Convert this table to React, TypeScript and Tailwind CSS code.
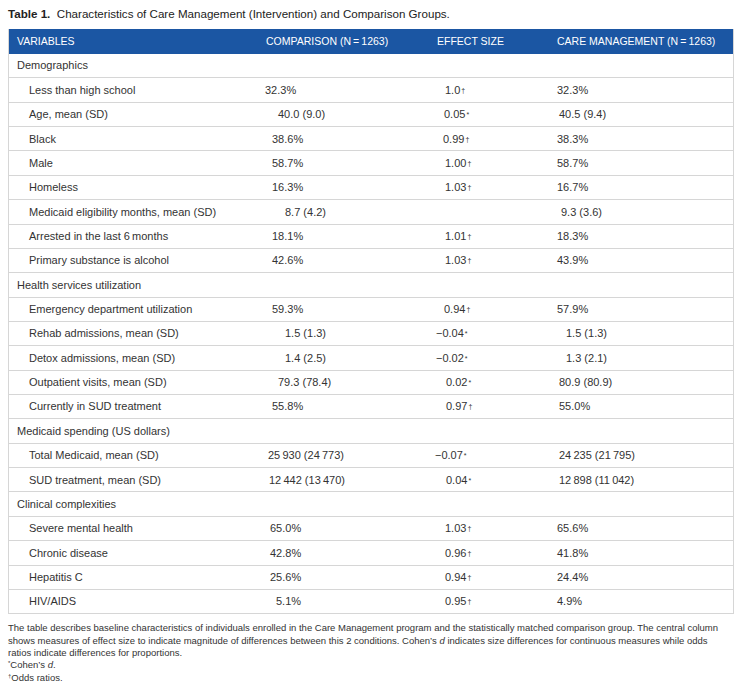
import React from "react";

type Cell = { t: string; sup?: string; pl: string };
type Row =
  | { kind: "cat"; label: string }
  | { kind: "item"; label: string; c: Cell; e?: Cell; m: Cell };

const T = "\u2009";
const D = "\u2020";

const rows: Row[] = [
  { kind: "cat", label: "Demographics" },
  { kind: "item", label: "Less than high school", c: { t: "32.3%", pl: "pl-[8px]" }, e: { t: "1.0", sup: D, pl: "pl-[17px]" }, m: { t: "32.3%", pl: "pl-[9px]" } },
  { kind: "item", label: "Age, mean (SD)", c: { t: "40.0 (9.0)", pl: "pl-[21px]" }, e: { t: "0.05", sup: "*", pl: "pl-[16px]" }, m: { t: "40.5 (9.4)", pl: "pl-[11px]" } },
  { kind: "item", label: "Black", c: { t: "38.6%", pl: "pl-[15px]" }, e: { t: "0.99", sup: D, pl: "pl-[15px]" }, m: { t: "38.3%", pl: "pl-[9px]" } },
  { kind: "item", label: "Male", c: { t: "58.7%", pl: "pl-[15px]" }, e: { t: "1.00", sup: D, pl: "pl-[17px]" }, m: { t: "58.7%", pl: "pl-[9px]" } },
  { kind: "item", label: "Homeless", c: { t: "16.3%", pl: "pl-[15px]" }, e: { t: "1.03", sup: D, pl: "pl-[17px]" }, m: { t: "16.7%", pl: "pl-[9px]" } },
  { kind: "item", label: "Medicaid eligibility months, mean (SD)", c: { t: "8.7 (4.2)", pl: "pl-[28px]" }, m: { t: "9.3 (3.6)", pl: "pl-[13px]" } },
  { kind: "item", label: `Arrested in the last 6${T}months`, c: { t: "18.1%", pl: "pl-[15px]" }, e: { t: "1.01", sup: D, pl: "pl-[17px]" }, m: { t: "18.3%", pl: "pl-[9px]" } },
  { kind: "item", label: "Primary substance is alcohol", c: { t: "42.6%", pl: "pl-[15px]" }, e: { t: "1.03", sup: D, pl: "pl-[17px]" }, m: { t: "43.9%", pl: "pl-[9px]" } },
  { kind: "cat", label: "Health services utilization" },
  { kind: "item", label: "Emergency department utilization", c: { t: "59.3%", pl: "pl-[15px]" }, e: { t: "0.94", sup: D, pl: "pl-[16px]" }, m: { t: "57.9%", pl: "pl-[9px]" } },
  { kind: "item", label: "Rehab admissions, mean (SD)", c: { t: "1.5 (1.3)", pl: "pl-[28px]" }, e: { t: "\u22120.04", sup: "*", pl: "pl-[8px]" }, m: { t: "1.5 (1.3)", pl: "pl-[18px]" } },
  { kind: "item", label: "Detox admissions, mean (SD)", c: { t: "1.4 (2.5)", pl: "pl-[28px]" }, e: { t: "\u22120.02", sup: "*", pl: "pl-[8px]" }, m: { t: "1.3 (2.1)", pl: "pl-[18px]" } },
  { kind: "item", label: "Outpatient visits, mean (SD)", c: { t: "79.3 (78.4)", pl: "pl-[21px]" }, e: { t: "0.02", sup: "*", pl: "pl-[18px]" }, m: { t: "80.9 (80.9)", pl: "pl-[11px]" } },
  { kind: "item", label: "Currently in SUD treatment", c: { t: "55.8%", pl: "pl-[15px]" }, e: { t: "0.97", sup: D, pl: "pl-[18px]" }, m: { t: "55.0%", pl: "pl-[11px]" } },
  { kind: "cat", label: "Medicaid spending (US dollars)" },
  { kind: "item", label: "Total Medicaid, mean (SD)", c: { t: `25${T}930 (24${T}773)`, pl: "pl-[11px]" }, e: { t: "\u22120.07", sup: "*", pl: "pl-[7px]" }, m: { t: `24${T}235 (21${T}795)`, pl: "pl-[11px]" } },
  { kind: "item", label: "SUD treatment, mean (SD)", c: { t: `12${T}442 (13${T}470)`, pl: "pl-[12px]" }, e: { t: "0.04", sup: "*", pl: "pl-[18px]" }, m: { t: `12${T}898 (11${T}042)`, pl: "pl-[11px]" } },
  { kind: "cat", label: "Clinical complexities" },
  { kind: "item", label: "Severe mental health", c: { t: "65.0%", pl: "pl-[13px]" }, e: { t: "1.03", sup: D, pl: "pl-[17px]" }, m: { t: "65.6%", pl: "pl-[9px]" } },
  { kind: "item", label: "Chronic disease", c: { t: "42.8%", pl: "pl-[13px]" }, e: { t: "0.96", sup: D, pl: "pl-[17px]" }, m: { t: "41.8%", pl: "pl-[9px]" } },
  { kind: "item", label: "Hepatitis C", c: { t: "25.6%", pl: "pl-[13px]" }, e: { t: "0.94", sup: D, pl: "pl-[17px]" }, m: { t: "24.4%", pl: "pl-[9px]" } },
  { kind: "item", label: "HIV/AIDS", c: { t: "5.1%", pl: "pl-[19px]" }, e: { t: "0.95", sup: D, pl: "pl-[17px]" }, m: { t: "4.9%", pl: "pl-[9px]" } },
];

function Val({ cell }: { cell?: Cell }) {
  if (!cell) return null;
  return (
    <span className={cell.pl + " whitespace-nowrap"}>
      {cell.t}
      {cell.sup && <sup className="text-[7px] relative -top-[1px] ml-[1px]">{cell.sup}</sup>}
    </span>
  );
}

export default function App() {
  return (
    <div
      className="w-[742px] h-[694px] bg-white text-[#333] overflow-hidden"
      style={{ fontFamily: '"Liberation Sans", Arial, sans-serif' }}
    >
      <div className="pl-[8px] pt-[7px] h-[29px] text-[11.6px] leading-[14px] text-[#222]">
        <span className="font-bold">Table 1.</span>
        <span>{"\u00a0 "}Characteristics of Care Management (Intervention) and Comparison Groups.</span>
      </div>
      <div className="ml-[8px] w-[726px] border-x border-[#d6d6d6]">
        <div className="flex items-center h-[25px] bg-[#1b56a3] text-white text-[10.5px]">
          <div className="w-[248px] pl-[8px]">VARIABLES</div>
          <div className="w-[171px] pl-[9px]">COMPARISON (N{T}={T}1263)</div>
          <div className="w-[120px] pl-[9px]">EFFECT SIZE</div>
          <div className="flex-1 pl-[9px]">CARE MANAGEMENT (N{T}={T}1263)</div>
        </div>
        {rows.map((r, i) =>
          r.kind === "cat" ? (
            <div key={i} className="flex items-center h-[24.36px] border-b border-[#d6d6d6] text-[11px]">
              <div className="pl-[8px]">{r.label}</div>
            </div>
          ) : (
            <div key={i} className="flex items-center h-[24.36px] border-b border-[#d6d6d6] text-[11px]">
              <div className="w-[248px] pl-[20px] whitespace-nowrap">{r.label}</div>
              <div className="w-[171px] flex"><Val cell={r.c} /></div>
              <div className="w-[120px] flex"><Val cell={r.e} /></div>
              <div className="flex-1 flex"><Val cell={r.m} /></div>
            </div>
          )
        )}
      </div>
      <div className="px-[8px] pt-[8px] text-[9.5px] leading-[12.4px] text-[#333]">
        <p className="whitespace-nowrap">
          The table describes baseline characteristics of individuals enrolled in the Care Management program and the
          statistically matched comparison group. The central column
          <br />
          shows measures of effect size to indicate magnitude of differences between this 2 conditions. Cohen’s{" "}
          <i>d</i> indicates size differences for continuous measures while odds
          <br />
          ratios indicate differences for proportions.
        </p>
        <p>
          <sup className="text-[6px]">*</sup>Cohen’s <i>d</i>.
        </p>
        <p>
          <sup className="text-[6px]">{D}</sup>Odds ratios.
        </p>
      </div>
    </div>
  );
}
